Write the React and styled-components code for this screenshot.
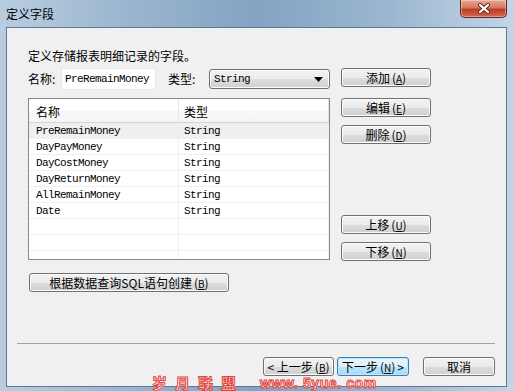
import styled, { createGlobalStyle, css } from 'styled-components';

const GlobalStyle = createGlobalStyle`
  html, body {
    margin: 0;
    padding: 0;
    background: #9db8d2;
  }
  body {
    font-family: "Noto Sans CJK SC", "Noto Sans", sans-serif;
    font-size: 12px;
    color: #000;
  }
`;

const rows = [
  { name: 'PreRemainMoney', type: 'String', selected: true },
  { name: 'DayPayMoney', type: 'String' },
  { name: 'DayCostMoney', type: 'String' },
  { name: 'DayReturnMoney', type: 'String' },
  { name: 'AllRemainMoney', type: 'String' },
  { name: 'Date', type: 'String' },
  { name: '', type: '' },
  { name: '', type: '' },
  { name: '', type: '' },
];

const Window = styled.div`
  position: relative;
  width: 514px;
  height: 391px;
  box-sizing: border-box;
  display: flex;
  flex-direction: column;
  padding: 0 7px 4px 6px;
  background: linear-gradient(90deg, #b9cde0 0%, #9ab5cf 25%, #84a3c2 50%, #9ab6d0 75%, #c3d5e6 100%);
  overflow: hidden;
`;

const TitleBar = styled.div`
  height: 27px;
  display: flex;
  align-items: flex-start;
`;

const Title = styled.span`
  padding-top: 6px;
  line-height: 16px;
  font-size: 12px;
`;

const CloseButton = styled.div`
  margin-left: auto;
  width: 47px;
  height: 18px;
  box-sizing: border-box;
  border: 1px solid #5b2a22;
  border-top: none;
  border-radius: 0 0 5px 5px;
  background: linear-gradient(180deg, #e9a796 0%, #d7775f 45%, #c03a22 55%, #d2694f 100%);
  display: flex;
  align-items: center;
  justify-content: center;
  box-shadow: inset 0 0 0 1px rgba(255, 255, 255, 0.35);
`;

const Client = styled.div`
  flex: 1;
  display: flex;
  flex-direction: column;
  background: #f0f0f0;
  border: 1px solid #5f7893;
`;

const Body = styled.div`
  padding: 20px 0 0 21px;
`;

const Description = styled.div`
  line-height: 16px;
  margin-bottom: 4px;
`;

const Grid = styled.div`
  display: grid;
  grid-template-columns: 302px 90px;
  column-gap: 11px;
  row-gap: 8px;
  align-items: start;
`;

const FieldRow = styled.div`
  display: flex;
  align-items: center;
  height: 22px;
`;

const Label = styled.span`
  width: ${p => p.w}px;
  margin-left: ${p => p.ml || 0}px;
  line-height: 16px;
`;

const mono = css`
  font-family: "Liberation Mono", "DejaVu Sans Mono", monospace;
  font-size: 11px;
  letter-spacing: -0.6px;
`;

const TextInput = styled.div`
  ${mono};
  width: 95px;
  height: 22px;
  box-sizing: border-box;
  margin-left: 3px;
  background: #fff;
  border: 1px solid #e6e6e6;
  padding: 0 3px;
  display: flex;
  align-items: center;
`;

const Select = styled.div`
  ${mono};
  margin-left: 5px;
  flex: 1;
  height: 20px;
  box-sizing: border-box;
  border: 1px solid #707070;
  border-radius: 3px;
  background: linear-gradient(180deg, #f2f2f2 0%, #ebebeb 50%, #dddddd 51%, #cfcfcf 100%);
  display: flex;
  align-items: center;
  padding: 0 6px 0 4px;
  box-shadow: inset 0 0 0 1px #fcfcfc;
`;

const SelectValue = styled.span`
  flex: 1;
`;

const Button = styled.button`
  font-family: "Noto Sans CJK SC", "Noto Sans", sans-serif;
  font-size: 12px;
  width: ${p => p.w || 90}px;
  height: 19px;
  padding: 0;
  box-sizing: border-box;
  border: 1px solid ${p => (p.primary ? '#3c7fb1' : '#707070')};
  border-radius: 3px;
  color: #000;
  line-height: 15px;
  background: ${p =>
    p.primary
      ? 'linear-gradient(180deg, #eaf6fd 0%, #d9f0fc 50%, #bee6fd 51%, #a7d9f5 100%)'
      : 'linear-gradient(180deg, #f2f2f2 0%, #ebebeb 50%, #dddddd 51%, #cfcfcf 100%)'};
  box-shadow: inset 0 0 0 1px ${p => (p.primary ? '#c5e5f7' : '#fcfcfc')};
  display: flex;
  align-items: center;
  justify-content: center;
  gap: 2px;
  margin-left: ${p => p.ml || 0}px;
  margin-top: ${p => p.mt || 0}px;

  u {
    font-size: 10px;
  }
`;

const Table = styled.div`
  height: 162px;
  box-sizing: border-box;
  border: 1px solid #828790;
  background: #fff;
  overflow: hidden;
`;

const HeaderRow = styled.div`
  display: grid;
  grid-template-columns: 150px 1fr;
  height: 24px;
  box-sizing: border-box;
  border-bottom: 1px solid #d5d5d5;
  background: linear-gradient(180deg, #ffffff 0%, #ffffff 50%, #f7f8f9 51%, #f3f4f6 100%);
`;

const HeaderCell = styled.div`
  font-size: 12px;
  display: flex;
  align-items: center;
  padding-left: ${p => p.pl}px;
  padding-top: 2px;
  border-right: 1px solid #e5e5e5;
`;

const Row = styled.div`
  display: grid;
  grid-template-columns: 150px 1fr;
  height: 16px;
  box-sizing: border-box;
  border-bottom: 1px solid #f0f0f0;
  background: ${p => (p.selected ? '#efefef' : '#fff')};
`;

const Cell = styled.div`
  ${mono};
  display: flex;
  align-items: center;
  padding-left: ${p => p.pl}px;
  padding-top: 1px;
  border-right: 1px solid #f0f0f0;
  white-space: pre;
`;

const SideButtons = styled.div`
  height: 163px;
  display: flex;
  flex-direction: column;
  justify-content: space-between;
`;

const ButtonGroup = styled.div`
  display: flex;
  flex-direction: column;
  gap: 8px;
`;

const Separator = styled.div`
  margin: auto 11px 0 10px;
  height: 1px;
  background: #a0a0a0;
`;

const Footer = styled.div`
  display: flex;
  justify-content: flex-end;
  padding: 13px 11px 10px 0;
`;

const Watermark = styled.div`
  position: absolute;
  left: 152px;
  top: 374px;
  height: 17px;
  display: flex;
  align-items: center;
  gap: 16px;
  font-weight: bold;
  line-height: 16px;
  color: #fff4f2;
  -webkit-text-stroke: 1px #e2433c;
  white-space: nowrap;
  pointer-events: none;
`;

const WatermarkCn = styled.span`
  font-family: "Noto Sans CJK SC", sans-serif;
  font-size: 15px;
  letter-spacing: 8px;
`;

const WatermarkEn = styled.span`
  font-family: "Liberation Sans", sans-serif;
  font-size: 14px;
  letter-spacing: 0.6px;
`;

const Acc = ({ k }) => (
  <span>
    (<u>{k}</u>)
  </span>
);

export default function App() {
  return (
    <>
      <GlobalStyle />
      <Window>
        <TitleBar>
          <Title>定义字段</Title>
          <CloseButton>
            <svg width="14" height="11" viewBox="0 0 14 11">
              <path d="M3 2 L11 9 M11 2 L3 9" stroke="#5b2a22" strokeWidth="4" strokeLinecap="round" />
              <path d="M3 2 L11 9 M11 2 L3 9" stroke="#ffffff" strokeWidth="2.2" strokeLinecap="round" />
            </svg>
          </CloseButton>
        </TitleBar>
        <Client>
          <Body>
            <Description>定义存储报表明细记录的字段。</Description>
            <Grid>
              <FieldRow>
                <Label w={30}>名称:</Label>
                <TextInput>PreRemainMoney</TextInput>
                <Label w={36} ml={12}>类型:</Label>
                <Select>
                  <SelectValue>String</SelectValue>
                  <svg width="9" height="5" viewBox="0 0 9 5">
                    <path d="M0 0 H9 L4.5 5 Z" fill="#000" />
                  </svg>
                </Select>
              </FieldRow>
              <Button>
                添加<Acc k="A" />
              </Button>
              <Table>
                <HeaderRow>
                  <HeaderCell pl={7}>名称</HeaderCell>
                  <HeaderCell pl={5}>类型</HeaderCell>
                </HeaderRow>
                {rows.map((r, i) => (
                  <Row key={i} selected={r.selected}>
                    <Cell pl={7}>{r.name}</Cell>
                    <Cell pl={5}>{r.type}</Cell>
                  </Row>
                ))}
              </Table>
              <SideButtons>
                <ButtonGroup>
                  <Button>
                    编辑<Acc k="E" />
                  </Button>
                  <Button>
                    删除<Acc k="D" />
                  </Button>
                </ButtonGroup>
                <ButtonGroup>
                  <Button>
                    上移<Acc k="U" />
                  </Button>
                  <Button>
                    下移<Acc k="N" />
                  </Button>
                </ButtonGroup>
              </SideButtons>
            </Grid>
            <Button w={200} ml={1} mt={12}>
              根据数据查询SQL语句创建<Acc k="B" />
            </Button>
          </Body>
          <Separator />
          <Footer>
            <Button w={71}>
              &lt; 上一步<Acc k="B" />
            </Button>
            <Button w={72} ml={3} primary>
              下一步<Acc k="N" /> &gt;
            </Button>
            <Button w={72} ml={14}>
              取消
            </Button>
          </Footer>
        </Client>
        <Watermark>
          <WatermarkCn>岁月联盟</WatermarkCn>
          <WatermarkEn>www. 5yue. com</WatermarkEn>
        </Watermark>
      </Window>
    </>
  );
}
